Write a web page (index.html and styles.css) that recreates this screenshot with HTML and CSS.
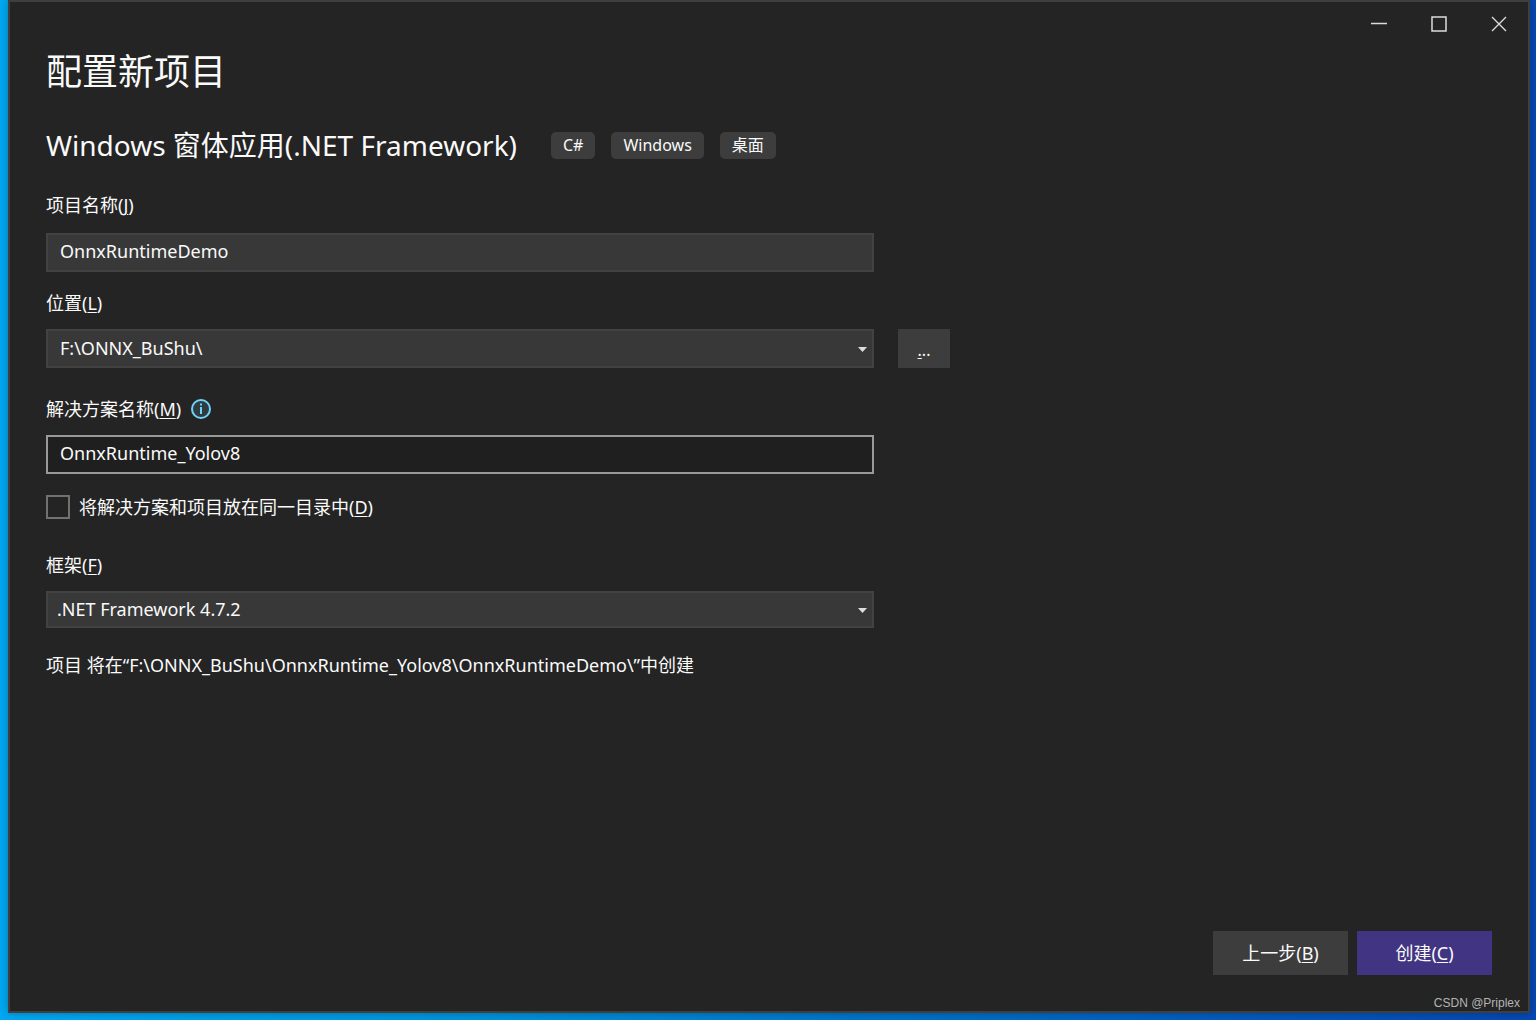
FILE: index.html
```html
<!DOCTYPE html>
<html lang="zh-CN">
<head>
<meta charset="utf-8">
<meta name="viewport" content="width=device-width, initial-scale=1">
<title>配置新项目</title>
<link rel="stylesheet" href="styles.css">
</head>
<body>
<div class="window">
  <header class="titlebar">
    <button type="button" class="caption-button" aria-label="最小化">
      <svg width="18" height="18" viewBox="0 0 18 18"><path d="M2 8.500h16" stroke="currentColor" stroke-width="1.500"/></svg>
    </button>
    <button type="button" class="caption-button" aria-label="最大化">
      <svg width="18" height="18" viewBox="0 0 18 18"><rect x="3" y="2" width="14" height="14" fill="none" stroke="currentColor" stroke-width="1.500"/></svg>
    </button>
    <button type="button" class="caption-button" aria-label="关闭">
      <svg width="18" height="18" viewBox="0 0 18 18"><path d="M3 2l14 14M17 2L3 16" stroke="currentColor" stroke-width="1.400"/></svg>
    </button>
  </header>

  <form class="dialog">
    <h1 class="title">配置新项目</h1>
    <div class="template">
      <h2 class="template-name">Windows 窗体应用(.NET Framework)</h2>
      <ul class="tags">
        <li class="tag">C#</li>
        <li class="tag">Windows</li>
        <li class="tag">桌面</li>
      </ul>
    </div>

    <div class="field field-name">
      <label class="label" for="name">项目名称(<u>J</u>)</label>
      <input class="control" id="name" type="text" value="OnnxRuntimeDemo">
    </div>

    <div class="field field-location">
      <label class="label" for="location">位置(<u>L</u>)</label>
      <div class="row">
        <span class="select-wrap">
          <select class="control" id="location"><option>F:\ONNX_BuShu\</option></select>
          <svg class="arrow" width="9" height="5" viewBox="0 0 9 5"><path d="M0 0h9L4.500 5z" fill="currentColor"/></svg>
        </span>
        <button type="button" class="browse" aria-label="浏览"><span><u>.</u>..</span></button>
      </div>
    </div>

    <div class="field field-solution">
      <div class="label-row">
        <label class="label" for="solution">解决方案名称(<u>M</u>)</label>
        <svg class="info" width="20" height="20" viewBox="0 0 20 20" role="img" aria-label="信息">
          <circle cx="10" cy="10" r="9" fill="#2f3b40" stroke="#6fd3f7" stroke-width="2"/>
          <path d="M9 4.500h2v2H9zM9 8h2v7H9z" fill="#6fd3f7"/>
        </svg>
      </div>
      <input class="control active" id="solution" type="text" value="OnnxRuntime_Yolov8">
    </div>

    <label class="check">
      <input class="checkbox" type="checkbox">
      <span>将解决方案和项目放在同一目录中(<u>D</u>)</span>
    </label>

    <div class="field field-framework">
      <label class="label" for="framework">框架(<u>F</u>)</label>
      <span class="select-wrap">
        <select class="control compact" id="framework"><option>.NET Framework 4.7.2</option></select>
        <svg class="arrow" width="9" height="5" viewBox="0 0 9 5"><path d="M0 0h9L4.500 5z" fill="currentColor"/></svg>
      </span>
    </div>

    <p class="summary">项目 将在<span class="quote">“</span>F:\ONNX_BuShu\OnnxRuntime_Yolov8\OnnxRuntimeDemo\<span class="quote">”</span>中创建</p>

    <footer class="actions">
      <button type="button" class="action">上一步(<u>B</u>)</button>
      <button type="submit" class="action primary">创建(<u>C</u>)</button>
    </footer>
  </form>
  <span class="watermark">CSDN @Priplex</span>
</div>
</body>
</html>
```
FILE: styles.css
```css
* {
  box-sizing: border-box;
}

body {
  margin: 0;
  min-height: 100vh;
  padding: 0 6px 7px 8px;
  display: flex;
  background: linear-gradient(90deg, #00a8f2, #0094dc 30%, #0070c8 60%, #0648b4);
  color: #fafafa;
  font: 18px/24px "Noto Sans", "Noto Sans CJK SC", sans-serif;
}

button,
input,
select {
  font: inherit;
  color: inherit;
}

u {
  text-decoration-thickness: 1px;
  text-underline-offset: 2px;
}

.window {
  position: relative;
  flex: 1;
  display: flex;
  flex-direction: column;
  background: #242424;
  border: 2px solid #3f3f3f;
  box-shadow: 0 0 8px rgba(0, 0, 0, 0.3);
}

.titlebar {
  display: flex;
  justify-content: flex-end;
}

.caption-button {
  width: 60px;
  height: 44px;
  padding: 0;
  display: grid;
  place-items: center;
  border: 0;
  background: none;
  color: #dcdcdc;
}

.dialog {
  flex: 1;
  display: flex;
  flex-direction: column;
  padding: 0 36px 36px;
}

.title {
  margin: 0;
  font-size: 36px;
  line-height: 52px;
  font-weight: 400;
}

.template {
  display: flex;
  align-items: center;
  gap: 34px;
  margin-top: 27px;
}

.template-name {
  margin: 0;
  font-size: 28px;
  line-height: 40px;
  font-weight: 400;
}

.tags {
  display: flex;
  gap: 16px;
  margin: 0;
  padding: 0;
  list-style: none;
}

.tag {
  padding: 0 12px;
  border-radius: 5px;
  background: #3d3d3d;
  font-size: 16px;
  line-height: 27px;
}

.field {
  display: flex;
  flex-direction: column;
  gap: 14px;
  max-width: 828px;
}

.field-name {
  gap: 16px;
  margin-top: 28px;
}

.field-location {
  max-width: 904px;
  margin-top: 19px;
}

.field-solution {
  margin-top: 29px;
}

.field-framework {
  margin-top: 34px;
}

.label {
  display: block;
}

.label-row {
  display: flex;
  align-items: center;
  gap: 10px;
}

.control {
  width: 100%;
  height: 39px;
  padding: 0 12px 2px;
  border: 2px solid #424242;
  border-radius: 0;
  background: #383838;
  outline: 0;
  appearance: none;
}

input.control {
  padding-bottom: 4px;
}

.control.compact {
  height: 37px;
  padding-left: 9px;
}

.control.active {
  border-color: #999;
  background: #1f1f1f;
}

.row {
  display: grid;
  grid-template-columns: minmax(0, 1fr) 52px;
  gap: 24px;
}

.select-wrap {
  position: relative;
  display: flex;
}

.arrow {
  position: absolute;
  right: 7px;
  top: 50%;
  margin-top: -2px;
  color: #dedede;
  pointer-events: none;
}

.browse {
  padding: 2px 0 0;
  border: 0;
  background: #3d3d3d;
  font-size: 16px;
}

.check {
  display: flex;
  align-items: center;
  gap: 9px;
  margin-top: 21px;
}

.checkbox {
  width: 24px;
  height: 24px;
  margin: 0;
  border: 2px solid #717171;
  background: #242424;
  appearance: none;
}

.checkbox:checked {
  background: #9184ee;
}

.summary {
  margin: 25px 0 0;
}

.quote {
  font-family: "Noto Sans", sans-serif;
}

.actions {
  display: flex;
  justify-content: flex-end;
  gap: 9px;
  margin-top: auto;
}

.action {
  width: 135px;
  height: 44px;
  padding: 0;
  border: 0;
  background: #3d3d3d;
}

.action.primary {
  background: #413482;
}

.watermark {
  position: absolute;
  right: 8px;
  bottom: 0;
  color: #b4b4b4;
  font: 12px/16px "Liberation Sans", sans-serif;
}
```
